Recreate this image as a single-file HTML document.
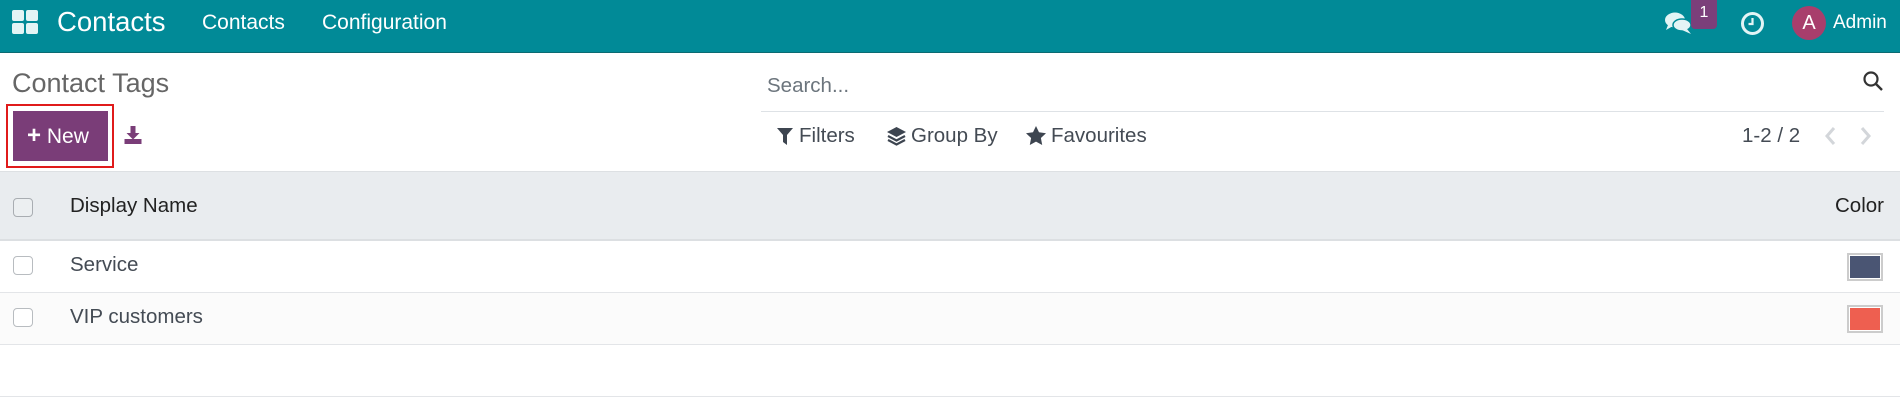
<!DOCTYPE html>
<html><head><meta charset="utf-8"><style>
*{margin:0;padding:0;box-sizing:border-box}
body{width:1900px;height:402px;overflow:hidden;background:#fff;font-family:"Liberation Sans",sans-serif;position:relative;color:#333}
.a{position:absolute;white-space:nowrap}
.nav{position:absolute;left:0;top:0;width:1900px;height:53px;background:#018a97;border-bottom:1px solid #0b6a72}
.sq{position:absolute;background:#e3f4f5;border-radius:2px}
.t{color:#fff}
.row{position:absolute;left:0;width:1900px;border-bottom:1px solid #e3e5e8}
.cb{position:absolute;left:13px;width:20px;height:19px;border:1px solid #b8bcc0;border-radius:4px;background:#fff}
.sw{position:absolute;left:1847px;width:36px;height:28px;border:2px solid #ccc;padding:1px;background:#fff}
.f{font-size:20.5px;color:#444b54}
</style></head><body>
<div class="nav">
 <div class="sq" style="left:12px;top:10px;width:12px;height:11px"></div>
 <div class="sq" style="left:26px;top:10px;width:12px;height:11px"></div>
 <div class="sq" style="left:12px;top:23px;width:12px;height:11px"></div>
 <div class="sq" style="left:26px;top:23px;width:12px;height:11px"></div>
 <div class="a t" style="left:57px;top:6px;font-size:27.5px">Contacts</div>
 <div class="a t" style="left:202px;top:11px;font-size:21px">Contacts</div>
 <div class="a t" style="left:322px;top:11px;font-size:21px">Configuration</div>
 <svg class="a" style="left:1664px;top:10px" width="30" height="26" viewBox="0 0 30 26"><ellipse cx="11" cy="10" rx="10" ry="7.5" fill="#e3f4f5"/><path d="M4 15 L2 20 L9 16Z" fill="#e3f4f5"/><ellipse cx="18" cy="15" rx="9" ry="6" fill="#e3f4f5" stroke="#018a97" stroke-width="1.5"/><path d="M23 19 L27 24 L18 20Z" fill="#e3f4f5"/></svg>
 <div class="a" style="left:1691px;top:0;width:26px;height:29px;background:#7b3f7a;border-radius:0 0 4px 4px;color:#fff;font-size:16px;text-align:center;line-height:26px">1</div>
 <svg class="a" style="left:1740px;top:11px" width="25" height="25" viewBox="0 0 25 25"><circle cx="12.5" cy="12.5" r="10" fill="none" stroke="#e3f4f5" stroke-width="3"/><path d="M12.5 7v6h-4" fill="none" stroke="#e3f4f5" stroke-width="2.2"/></svg>
 <div class="a" style="left:1792px;top:6px;width:34px;height:34px;border-radius:50%;background:#a83e6c;color:#fff;font-size:20px;text-align:center;line-height:34px">A</div>
 <div class="a t" style="left:1833px;top:12px;font-size:19px">Admin</div>
</div>
<div class="a" style="left:12px;top:68px;font-size:27px;color:#666">Contact Tags</div>
<div class="a" style="left:6px;top:104px;width:108px;height:64px;border:2px solid #e01b1b"></div>
<div class="a" style="left:13px;top:111px;width:95px;height:50px;background:#7a3d78;color:#fff;font-size:21px;line-height:50px;padding-left:14px"><b style="font-size:24px">+</b> New</div>
<svg class="a" style="left:122px;top:125px" width="22" height="20" viewBox="0 0 17 20"><path d="M6 1h5v7h4l-6.5 6.5L2 8h4z" fill="#7a3d78"/><rect x="0" y="14" width="17" height="5" fill="#7a3d78"/></svg>
<div class="a" style="left:767px;top:74px;font-size:20.5px;color:#6c757d">Search...</div>
<svg class="a" style="left:1862px;top:70px" width="22" height="22" viewBox="0 0 22 22"><circle cx="9" cy="9" r="6.5" fill="none" stroke="#333" stroke-width="2.2"/><path d="M14 14l6 6" stroke="#333" stroke-width="2.4"/></svg>
<div class="a" style="left:761px;top:111px;width:1123px;height:1px;background:#dee2e6"></div>
<svg class="a" style="left:777px;top:128px" width="16" height="17" viewBox="0 0 16 17"><path d="M0 0h16l-6 7v10l-4-3V7z" fill="#3d4550"/></svg>
<div class="a f" style="left:799px;top:124px">Filters</div>
<svg class="a" style="left:886px;top:126px" width="21" height="21" viewBox="0 0 21 21"><path d="M10.5 1L20 6l-9.5 5L1 6z" fill="#3d4550"/><path d="M2 10l8.5 4.5L19 10M2 14l8.5 4.5L19 14" fill="none" stroke="#3d4550" stroke-width="2.2"/></svg>
<div class="a f" style="left:911px;top:124px">Group By</div>
<svg class="a" style="left:1026px;top:126px" width="20" height="19" viewBox="0 0 20 19"><path d="M10 0l3 6.3 7 .9-5.1 4.8 1.3 7L10 15.6 3.8 19l1.3-7L0 7.2l7-.9z" fill="#3d4550"/></svg>
<div class="a f" style="left:1051px;top:124px">Favourites</div>
<div class="a f" style="left:1742px;top:124px">1-2 / 2</div>
<svg class="a" style="left:1823px;top:126px" width="52" height="20" viewBox="0 0 52 20"><path d="M11 2L4 10l7 8M39 2l7 8-7 8" fill="none" stroke="#d3d6da" stroke-width="3"/></svg>
<div class="row" style="top:171px;height:70px;background:#e9ecef;border-top:1px solid #dde0e3;border-bottom:2px solid #dcdfe2"></div>
<div class="cb" style="top:198px;border-color:#a9adb2;background:#eceff1"></div>
<div class="a" style="left:70px;top:194px;font-size:20.5px;color:#222">Display Name</div>
<div class="a" style="right:16px;top:194px;font-size:20.5px;color:#222">Color</div>
<div class="row" style="top:241px;height:52px"></div>
<div class="cb" style="top:256px"></div>
<div class="a f" style="left:70px;top:253px">Service</div>
<div class="sw" style="top:253px"><div style="width:100%;height:100%;background:#4a5573"></div></div>
<div class="row" style="top:293px;height:52px;background:#fbfbfb"></div>
<div class="cb" style="top:308px"></div>
<div class="a f" style="left:70px;top:305px">VIP customers</div>
<div class="sw" style="top:305px"><div style="width:100%;height:100%;background:#ee5f50"></div></div>
<div class="row" style="top:345px;height:52px"></div>
</body></html>
